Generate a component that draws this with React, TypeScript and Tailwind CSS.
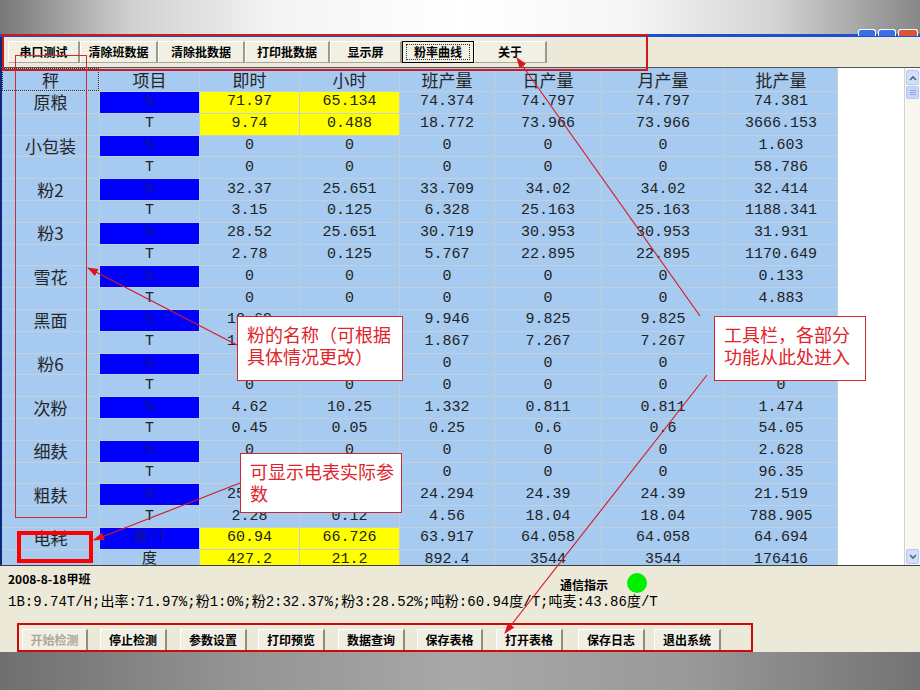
import React from 'react';

type Pair = { name: string; units: [string, string]; a: string[]; b: string[]; hot?: boolean };

// values fully hidden under the callouts are left blank
const PAIRS: Pair[] = [
  { name: '原粮', units: ['%', 'T'], a: ['71.97', '65.134', '74.374', '74.797', '74.797', '74.381'], b: ['9.74', '0.488', '18.772', '73.966', '73.966', '3666.153'], hot: true },
  { name: '小包装', units: ['%', 'T'], a: ['0', '0', '0', '0', '0', '1.603'], b: ['0', '0', '0', '0', '0', '58.786'] },
  { name: '粉2', units: ['%', 'T'], a: ['32.37', '25.651', '33.709', '34.02', '34.02', '32.414'], b: ['3.15', '0.125', '6.328', '25.163', '25.163', '1188.341'] },
  { name: '粉3', units: ['%', 'T'], a: ['28.52', '25.651', '30.719', '30.953', '30.953', '31.931'], b: ['2.78', '0.125', '5.767', '22.895', '22.895', '1170.649'] },
  { name: '雪花', units: ['%', 'T'], a: ['0', '0', '0', '0', '0', '0.133'], b: ['0', '0', '0', '0', '0', '4.883'] },
  { name: '黑面', units: ['%', 'T'], a: ['10.69', '', '9.946', '9.825', '9.825', ''], b: ['1.581', '', '1.867', '7.267', '7.267', ''] },
  { name: '粉6', units: ['%', 'T'], a: ['', '', '0', '0', '0', ''], b: ['0', '0', '0', '0', '0', '0'] },
  { name: '次粉', units: ['%', 'T'], a: ['4.62', '10.25', '1.332', '0.811', '0.811', '1.474'], b: ['0.45', '0.05', '0.25', '0.6', '0.6', '54.05'] },
  { name: '细麸', units: ['%', 'T'], a: ['0', '0', '0', '0', '0', '2.628'], b: ['', '', '0', '0', '0', '96.35'] },
  { name: '粗麸', units: ['%', 'T'], a: ['25.81', '', '24.294', '24.39', '24.39', '21.519'], b: ['2.28', '0.12', '4.56', '18.04', '18.04', '788.905'] },
  { name: '电耗', units: ['度/T', '度'], a: ['60.94', '66.726', '63.917', '64.058', '64.058', '64.694'], b: ['427.2', '21.2', '892.4', '3544', '3544', '176416'], hot: true },
];

const HEAD = ['秤', '项目', '即时', '小时', '班产量', '日产量', '月产量', '批产量'];

const TOOLS = [
  { label: '串口测试', w: 'w-[72px]' },
  { label: '清除班数据', w: 'w-[78px]' },
  { label: '清除批数据', w: 'w-[87px]' },
  { label: '打印批数据', w: 'w-[85px]' },
  { label: '显示屏', w: 'w-[72px]' },
  { label: '粉率曲线', w: 'w-[72px]', focus: true },
  { label: '关于', w: 'w-[73px]' },
];

const ACTIONS = [
  { label: '开始检测', cls: 'ml-[14px] w-[66px]', off: true },
  { label: '停止检测', cls: 'ml-[12px] w-[67px]' },
  { label: '参数设置', cls: 'ml-[13px] w-[67px]' },
  { label: '打印预览', cls: 'ml-[11px] w-[67px]' },
  { label: '数据查询', cls: 'ml-[13px] w-[67px]' },
  { label: '保存表格', cls: 'ml-[12px] w-[66px]' },
  { label: '打开表格', cls: 'ml-[13px] w-[67px]' },
  { label: '保存日志', cls: 'ml-[15px] w-[67px]' },
  { label: '退出系统', cls: 'ml-[9px] w-[67px]' },
];

const grid = 'grid grid-cols-[98px_100px_100px_100px_95px_107px_123px_113px]';
const cell = 'flex items-center justify-center border-r border-b border-[#c4cfdc] whitespace-nowrap leading-[18px]';

const Row = ({ name, unit, vals, hot }: { name?: string; unit: string; vals: string[]; hot?: boolean }) => (
  <div className={`${grid} h-[21.8px]`}>
    <div className={`${cell} text-[17px] font-['Noto_Sans_CJK_SC',sans-serif] text-[#262626]`}>{name}</div>
    <div className={`${cell} ${unit === 'T' || unit === '度' ? '' : 'bg-[#0000ff] text-[#141488]'}`}>{unit}</div>
    {vals.map((v, i) => (
      <div key={i} className={`${cell} ${hot && i < 2 ? 'bg-[#ffff00]' : ''}`}>{v}</div>
    ))}
  </div>
);

export default function App() {
  return (
    <div className="relative w-[920px] h-[690px] overflow-hidden flex flex-col bg-[#ece9d8] font-['Noto_Sans_CJK_SC',sans-serif]">
      {/* slide top */}
      <div className="h-[34px] shrink-0 bg-[linear-gradient(90deg,#777777_0%,#cfcfcf_14%,#f4f4f4_30%,#ffffff_50%,#f6f6f6_68%,#d4d4d4_84%,#878787_100%)]" />
      <div className="h-[3px] shrink-0 bg-[#1e4fd0]" />

      {/* toolbar */}
      <div className="h-[30px] shrink-0 flex items-start pt-[4px] pl-[6px] border-l-2 border-[#0c2a78] bg-[#ece9d8]">
        {TOOLS.map(t => (
          <div
            key={t.label}
            className={`${t.w} h-[22px] flex items-center justify-center text-[12px] font-bold text-black leading-none bg-[#f2f0e4] ${
              t.focus ? 'border border-black' : 'border-t border-l border-t-white border-l-white border-r-2 border-b border-r-[#9c9a8c] border-b-[#aca899]'
            }`}
          >
            {t.focus ? (
              <span className="w-[64px] h-[16px] flex items-center justify-center border border-dotted border-[#333]">{t.label}</span>
            ) : (
              t.label
            )}
          </div>
        ))}
      </div>

      {/* table area */}
      <div className="h-[498px] shrink-0 flex overflow-hidden border-l-2 border-t border-[#0c2a78] border-t-[#555555]">
        <div className="w-[836px] shrink-0 bg-[#a6caf0] text-[15px] text-[#222] font-['Liberation_Mono','Noto_Sans_CJK_SC',monospace]">
          <div className={`${grid} h-[24px]`}>
            {HEAD.map((h, i) => (
              <div key={h} className={`${cell} text-[17px] font-['Noto_Sans_CJK_SC',sans-serif] text-[#262626]`}>
                {i === 0 ? (
                  <span className="w-full h-full flex items-center justify-center border border-dotted border-[#303030]">{h}</span>
                ) : (
                  h
                )}
              </div>
            ))}
          </div>
          {PAIRS.map(p => (
            <React.Fragment key={p.name}>
              <Row name={p.name} unit={p.units[0]} vals={p.a} hot={p.hot} />
              <Row unit={p.units[1]} vals={p.b} hot={p.hot} />
            </React.Fragment>
          ))}
        </div>
        <div className="flex-1 bg-white" />
        <div className="w-[16px] shrink-0 bg-[#f7f6f1] border-l border-[#d6d3c8] flex flex-col">
          <div className="mt-[2px] mx-[1px] h-[15px] rounded-[2px] border border-[#b6c8ee] bg-[#d2e0fb] flex items-center justify-center">
            <svg width="8" height="6" viewBox="0 0 8 6"><path d="M1 5 L4 2 L7 5" stroke="#4d6185" strokeWidth="1.6" fill="none" /></svg>
          </div>
          <div className="mt-[1px] mx-[1px] h-[13px] rounded-[2px] border border-[#b6c8ee] bg-[#c6d7fa] flex flex-col items-center justify-center gap-[1px]">
            <span className="w-[6px] h-px bg-[#8fa6d6]" />
            <span className="w-[6px] h-px bg-[#8fa6d6]" />
            <span className="w-[6px] h-px bg-[#8fa6d6]" />
          </div>
          <div className="flex-1" />
          <div className="mb-[1px] mx-[1px] h-[15px] rounded-[2px] border border-[#b6c8ee] bg-[#d2e0fb] flex items-center justify-center">
            <svg width="8" height="6" viewBox="0 0 8 6"><path d="M1 1 L4 4 L7 1" stroke="#4d6185" strokeWidth="1.6" fill="none" /></svg>
          </div>
        </div>
      </div>

      {/* status panel */}
      <div className="h-[87px] shrink-0 border-t border-[#404040] bg-[#ece9d8] pl-[8px] text-black">
        <div className="h-[26px] flex items-start">
          <span className="w-[552px] mt-[6px] text-[12px] font-bold leading-[14px]">2008-8-18甲班</span>
          <span className="mt-[12px] text-[12px] font-bold leading-[14px]">通信指示</span>
          <span className="ml-[19px] mt-[7px] w-[20px] h-[20px] rounded-full bg-[#00ee00] shrink-0" />
        </div>
        <div className="mt-[1px] h-[18px] leading-[18px] text-[14px] whitespace-nowrap font-['Liberation_Mono','Noto_Sans_CJK_SC',monospace]">
          1B:9.74T/H;出率:71.97%;粉1:0%;粉2:32.37%;粉3:28.52%;吨粉:60.94度/T;吨麦:43.86度/T
        </div>
        <div className="mt-[18px] flex">
          {ACTIONS.map(a => (
            <div
              key={a.label}
              className={`${a.cls} h-[22px] flex items-center justify-center text-[12px] font-bold leading-none bg-[#f1efe4] border-t border-l border-t-white border-l-white border-r-2 border-b border-r-[#8f8d80] border-b-[#aca899] ${
                a.off ? 'text-[#aca899]' : 'text-black'
              }`}
            >
              {a.label}
            </div>
          ))}
        </div>
      </div>

      {/* slide bottom */}
      <div className="flex-1 bg-[linear-gradient(90deg,#6f6f6f_0%,#939393_25%,#a8a8a8_50%,#999999_75%,#737373_100%)]" />

      {/* window caption buttons, cut off */}
      <div className="absolute top-[29px] left-[858px] flex gap-[2px]">
        <span className="w-[18px] h-[7px] rounded-t-[3px] border border-b-0 border-white bg-[#3a6fe6]" />
        <span className="w-[18px] h-[7px] rounded-t-[3px] border border-b-0 border-white bg-[#3a6fe6]" />
        <span className="w-[20px] h-[7px] rounded-t-[3px] border border-b-0 border-white bg-[#d8553a]" />
      </div>

      {/* red highlight frames */}
      <div className="absolute left-[2px] top-[34px] w-[646px] h-[37px] border-2 border-[#d0181e]" />
      <div className="absolute left-[15px] top-[55px] w-[72px] h-[463px] border border-[#d42a2a]" />
      <div className="absolute left-[17px] top-[531px] w-[76px] h-[32px] border-[4px] border-[#ff0000]" />
      <div className="absolute left-[17px] top-[623px] w-[736px] h-[29px] border-2 border-[#cc0a0a]" />

      {/* arrows */}
      <svg className="absolute left-0 top-0 pointer-events-none" width="920" height="690" viewBox="0 0 920 690">
        <defs>
          <marker id="ah" markerUnits="userSpaceOnUse" markerWidth="11" markerHeight="8" refX="10" refY="4" orient="auto">
            <path d="M0,0 L11,4 L0,8 z" fill="#e0141c" />
          </marker>
        </defs>
        <g stroke="#d81820" strokeWidth="1.1" fill="none">
          <line x1="237" y1="345" x2="88" y2="268" markerEnd="url(#ah)" />
          <line x1="700" y1="316" x2="517" y2="58" markerEnd="url(#ah)" />
          <line x1="707" y1="375" x2="505" y2="633" markerEnd="url(#ah)" />
          <line x1="240" y1="483" x2="94" y2="540" markerEnd="url(#ah)" />
        </g>
      </svg>

      {/* callouts */}
      <div className="absolute left-[237px] top-[316px] w-[166px] h-[65px] bg-white border border-[#cf2a2a] pl-[9px] pt-[6px] text-[18px] leading-[22px] text-[#e0242a] whitespace-nowrap">
        粉的名称（可根据<br />具体情况更改）
      </div>
      <div className="absolute left-[714px] top-[316px] w-[152px] h-[65px] bg-white border border-[#cf2a2a] pl-[9px] pt-[6px] text-[18px] leading-[22px] text-[#e0242a] whitespace-nowrap">
        工具栏，各部分<br />功能从此处进入
      </div>
      <div className="absolute left-[240px] top-[453px] w-[162px] h-[60px] bg-white border border-[#cf2a2a] pl-[9px] pt-[6px] text-[18px] leading-[22px] text-[#e0242a] whitespace-nowrap">
        可显示电表实际参<br />数
      </div>
    </div>
  );
}
